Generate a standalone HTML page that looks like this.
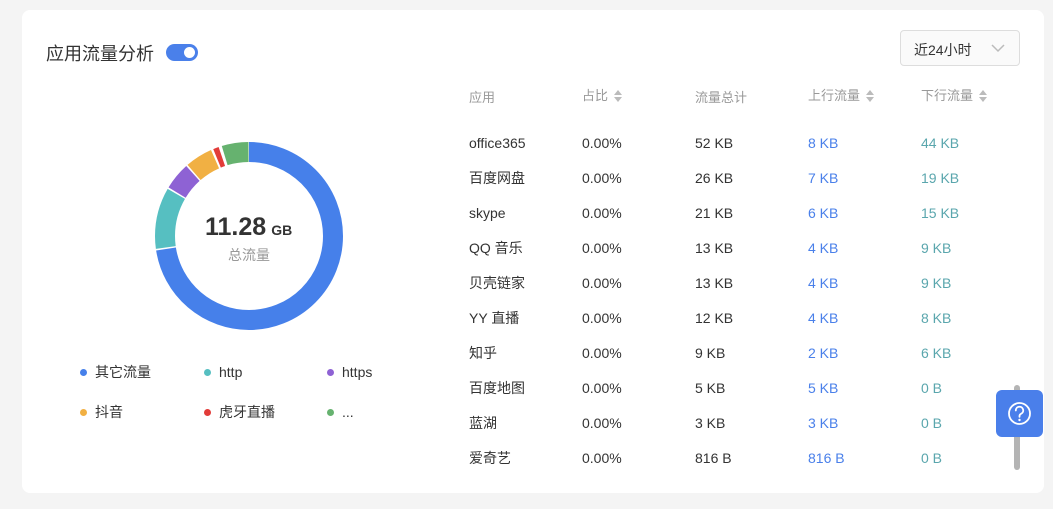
<!DOCTYPE html>
<html><head><meta charset="utf-8"><style>
*{margin:0;padding:0;box-sizing:border-box}
body{width:1053px;height:509px;background:#f4f4f4;font-family:"Liberation Sans","Noto Sans CJK SC",sans-serif;position:relative;overflow:hidden;color:#333}
.card{position:absolute;left:22px;top:10px;width:1022px;height:483px;background:#fff;border-radius:8px}
.abs{position:absolute;white-space:nowrap;line-height:20px}
.title{left:46px;top:43px;font-size:18px;line-height:22px;color:#333}
.tog{left:166px;top:44px;width:32px;height:17px;border-radius:9px;background:#4a80ea}
.tog::after{content:"";position:absolute;right:3px;top:3px;width:11px;height:11px;border-radius:50%;background:#fff}
.sel{left:900px;top:30px;width:120px;height:36px;border:1px solid #ddd;border-radius:4px;background:#fafafa;font-size:14px;padding:9px 0 0 13px;color:#333}
.th{font-size:13px;color:#999;top:88px}
.sort{display:inline-block;vertical-align:middle;margin-left:6px;width:8px;height:12px;position:relative;top:-1px}
.sort::before{content:"";position:absolute;left:0;top:0;border:4px solid transparent;border-bottom:5px solid #bbb;border-top:0}
.sort::after{content:"";position:absolute;left:0;bottom:0;border:4px solid transparent;border-top:5px solid #bbb;border-bottom:0}
.td{font-size:14px;color:#333}
.up{color:#4a80ea}.dn{color:#5aa6ad}
.lg{font-size:14px;color:#333}
.dot{display:inline-block;width:7px;height:7px;border-radius:50%;margin-right:8px;vertical-align:middle;position:relative;top:-1px}
.help{left:996px;top:390px;width:47px;height:47px;background:#4a7fea;border-radius:6px}
.sb{left:1014px;top:385px;width:6px;height:85px;background:#b4b4b4;border-radius:3px}
</style></head><body>
<div class="card"></div>
<div class="abs title">应用流量分析</div>
<div class="abs tog"></div>
<div class="abs sel">近24小时<svg style="position:absolute;right:14px;top:13px" width="14" height="9" viewBox="0 0 14 9"><path d="M1 1l6 6 6-6" fill="none" stroke="#bbb" stroke-width="1.5"/></svg></div>

<svg class="abs" style="left:149px;top:136px" width="200" height="200" viewBox="0 0 200 200">
<g transform="rotate(-90 100 100)" fill="none" stroke-width="20">
<circle cx="100" cy="100" r="84" stroke="#4680ea" stroke-dasharray="382.6 600" stroke-dashoffset="0"/>
<circle cx="100" cy="100" r="84" stroke="#56bfc1" stroke-dasharray="55.7 600" stroke-dashoffset="-384.1"/>
<circle cx="100" cy="100" r="84" stroke="#8e62d4" stroke-dasharray="24.9 600" stroke-dashoffset="-441.3"/>
<circle cx="100" cy="100" r="84" stroke="#f1b043" stroke-dasharray="24.9 600" stroke-dashoffset="-467.7"/>
<circle cx="100" cy="100" r="84" stroke="#e23c39" stroke-dasharray="5.1 600" stroke-dashoffset="-494.8"/>
<circle cx="100" cy="100" r="84" stroke="#66b26f" stroke-dasharray="24.2 600" stroke-dashoffset="-502.9"/>
</g></svg>
<div class="abs" style="left:205px;top:212px;line-height:30px;font-size:25px;font-weight:bold;color:#333">11.28<span style="font-size:14px;margin-left:5px">GB</span></div>
<div class="abs" style="left:228px;top:245px;font-size:14px;color:#999">总流量</div>

<div class="abs lg" style="left:80px;top:362px"><span class="dot" style="background:#4680ea"></span>其它流量</div>
<div class="abs lg" style="left:204px;top:362px"><span class="dot" style="background:#56bfc1"></span>http</div>
<div class="abs lg" style="left:327px;top:362px"><span class="dot" style="background:#8e62d4"></span>https</div>
<div class="abs lg" style="left:80px;top:402px"><span class="dot" style="background:#f1b043"></span>抖音</div>
<div class="abs lg" style="left:204px;top:402px"><span class="dot" style="background:#e23c39"></span>虎牙直播</div>
<div class="abs lg" style="left:327px;top:402px"><span class="dot" style="background:#66b26f"></span>...</div>

<div class="abs th" style="left:469px">应用</div>
<div class="abs th" style="left:582px;top:86px">占比<span class="sort"></span></div>
<div class="abs th" style="left:695px">流量总计</div>
<div class="abs th" style="left:808px;top:86px">上行流量<span class="sort"></span></div>
<div class="abs th" style="left:921px;top:86px">下行流量<span class="sort"></span></div>

<div class="abs td" style="left:469px;top:133px">office365</div><div class="abs td" style="left:582px;top:133px">0.00%</div><div class="abs td" style="left:695px;top:133px">52 KB</div><div class="abs td up" style="left:808px;top:133px">8 KB</div><div class="abs td dn" style="left:921px;top:133px">44 KB</div>
<div class="abs td" style="left:469px;top:168px">百度网盘</div><div class="abs td" style="left:582px;top:168px">0.00%</div><div class="abs td" style="left:695px;top:168px">26 KB</div><div class="abs td up" style="left:808px;top:168px">7 KB</div><div class="abs td dn" style="left:921px;top:168px">19 KB</div>
<div class="abs td" style="left:469px;top:203px">skype</div><div class="abs td" style="left:582px;top:203px">0.00%</div><div class="abs td" style="left:695px;top:203px">21 KB</div><div class="abs td up" style="left:808px;top:203px">6 KB</div><div class="abs td dn" style="left:921px;top:203px">15 KB</div>
<div class="abs td" style="left:469px;top:238px">QQ 音乐</div><div class="abs td" style="left:582px;top:238px">0.00%</div><div class="abs td" style="left:695px;top:238px">13 KB</div><div class="abs td up" style="left:808px;top:238px">4 KB</div><div class="abs td dn" style="left:921px;top:238px">9 KB</div>
<div class="abs td" style="left:469px;top:273px">贝壳链家</div><div class="abs td" style="left:582px;top:273px">0.00%</div><div class="abs td" style="left:695px;top:273px">13 KB</div><div class="abs td up" style="left:808px;top:273px">4 KB</div><div class="abs td dn" style="left:921px;top:273px">9 KB</div>
<div class="abs td" style="left:469px;top:308px">YY 直播</div><div class="abs td" style="left:582px;top:308px">0.00%</div><div class="abs td" style="left:695px;top:308px">12 KB</div><div class="abs td up" style="left:808px;top:308px">4 KB</div><div class="abs td dn" style="left:921px;top:308px">8 KB</div>
<div class="abs td" style="left:469px;top:343px">知乎</div><div class="abs td" style="left:582px;top:343px">0.00%</div><div class="abs td" style="left:695px;top:343px">9 KB</div><div class="abs td up" style="left:808px;top:343px">2 KB</div><div class="abs td dn" style="left:921px;top:343px">6 KB</div>
<div class="abs td" style="left:469px;top:378px">百度地图</div><div class="abs td" style="left:582px;top:378px">0.00%</div><div class="abs td" style="left:695px;top:378px">5 KB</div><div class="abs td up" style="left:808px;top:378px">5 KB</div><div class="abs td dn" style="left:921px;top:378px">0 B</div>
<div class="abs td" style="left:469px;top:413px">蓝湖</div><div class="abs td" style="left:582px;top:413px">0.00%</div><div class="abs td" style="left:695px;top:413px">3 KB</div><div class="abs td up" style="left:808px;top:413px">3 KB</div><div class="abs td dn" style="left:921px;top:413px">0 B</div>
<div class="abs td" style="left:469px;top:448px">爱奇艺</div><div class="abs td" style="left:582px;top:448px">0.00%</div><div class="abs td" style="left:695px;top:448px">816 B</div><div class="abs td up" style="left:808px;top:448px">816 B</div><div class="abs td dn" style="left:921px;top:448px">0 B</div>

<div class="abs sb"></div>
<div class="abs help"><svg width="47" height="47" viewBox="0 0 47 47"><circle cx="23.5" cy="23.5" r="10.5" fill="none" stroke="#fff" stroke-width="1.8"/><path d="M19.8 20.5a3.7 3.7 0 1 1 5.2 3.3c-1 .5-1.5 1.2-1.5 2.3v.8" fill="none" stroke="#fff" stroke-width="1.8" stroke-linecap="round"/><circle cx="23.5" cy="30" r="1.2" fill="#fff"/></svg></div>
</body></html>
